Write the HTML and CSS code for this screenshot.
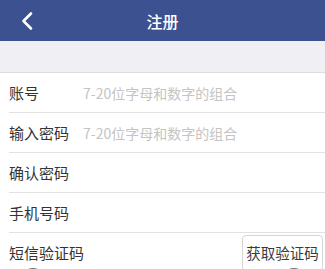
FILE: index.html
```html
<!DOCTYPE html>
<html lang="zh">
<head>
<meta charset="utf-8">
<link rel="stylesheet" href="styles.css">
</head>
<body>
<div class="nav">
  <div class="back">
    <svg width="14" height="20" viewBox="0 0 14 20"><polyline points="11,2.5 3.5,10 11,17.5" fill="none" stroke="#fff" stroke-width="2.6" stroke-linecap="round" stroke-linejoin="round"/></svg>
  </div>
  <div class="title">注册</div>
  <div></div>
</div>
<div class="band"></div>
<div class="form">
  <div class="row"><span class="label">账号</span><span class="ph">7-20位字母和数字的组合</span></div>
  <div class="row"><span class="label">输入密码</span><span class="ph">7-20位字母和数字的组合</span></div>
  <div class="row"><span class="label">确认密码</span></div>
  <div class="row"><span class="label">手机号码</span></div>
  <div class="row last"><span class="label">短信验证码</span><span class="btn">获取验证码</span>
    <span class="dot dot-left"></span><span class="dot dot-right"></span>
  </div>
</div>
</body>
</html>
```
FILE: styles.css
```css
html, body {
  margin: 0;
  padding: 0;
  overflow: hidden;
  background: #fff;
  font-family: "Noto Sans CJK SC", "Noto Sans", sans-serif;
}
.nav {
  height: 41px;
  background: #3c5190;
  display: grid;
  grid-template-columns: 60px 1fr 60px;
  align-items: center;
  color: #fff;
}
.back {
  display: flex;
  padding-left: 20px;
  padding-top: 1px;
}
.title {
  text-align: center;
  font-size: 16px;
  line-height: 20px;
  font-weight: 500;
}
.band {
  height: 31px;
  background: #efeff4;
  border-bottom: 1px solid #dcdcdf;
}
.form {
  padding-left: 9px;
}
.row {
  height: 39px;
  border-bottom: 1px solid #e2e2e2;
  display: flex;
  align-items: center;
  position: relative;
}
.row.last {
  border-bottom: none;
}
.label {
  min-width: 74px;
  white-space: nowrap;
  font-size: 15px;
  color: #333;
  flex: none;
}
.ph {
  font-size: 14px;
  color: #c4c4c4;
  white-space: nowrap;
}
.btn {
  margin-left: auto;
  margin-right: 2px;
  height: 36px;
  width: 81px;
  box-sizing: border-box;
  border: 1px solid #d6d6d6;
  border-radius: 4px;
  display: flex;
  align-items: center;
  justify-content: center;
  font-size: 14.5px;
  white-space: nowrap;
  color: #3a3a3a;
  background: #fff;
}
.dot {
  position: absolute;
  top: 35px;
  width: 22px;
  height: 22px;
  border-radius: 50%;
  background: #6e6e6e;
}
.dot-left { left: 13px; }
.dot-right { left: 274px; }
```
